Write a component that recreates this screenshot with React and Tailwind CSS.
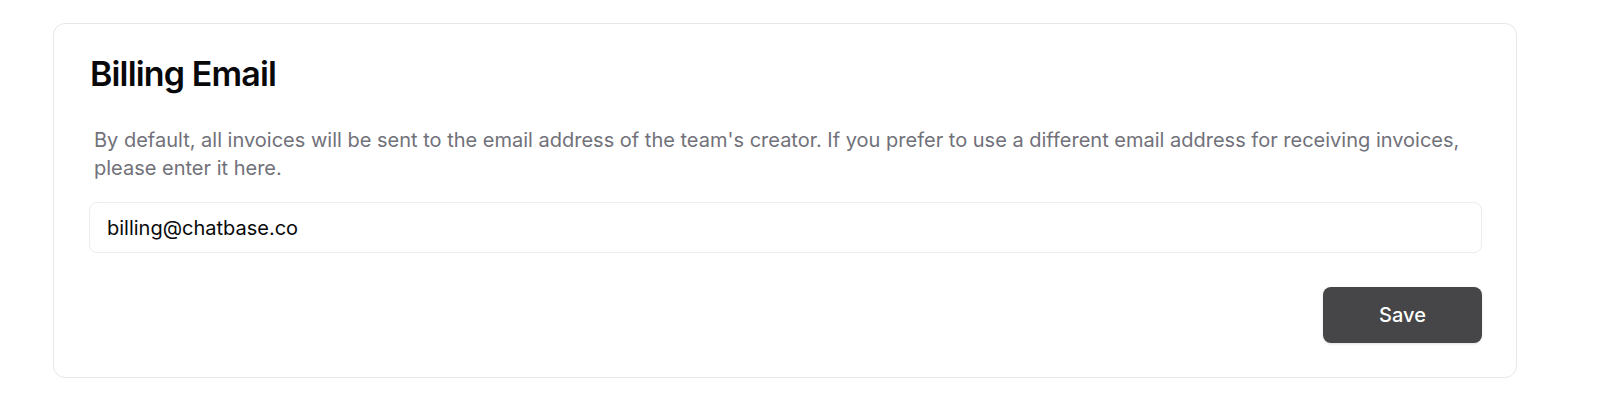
import { useState } from 'react';

export default function App() {
  const [email, setEmail] = useState('billing@chatbase.co');

  return (
    <div className="min-h-screen bg-white pt-[23px] pl-[53px]" style={{ fontFamily: 'Inter, "Noto Sans", sans-serif' }}>
      <div className="w-[1464px] rounded-xl border border-[#e7e7e9] bg-white pl-[35px] pr-[34px] pt-[30px] pb-[34px]">
        {/* Title */}
        <h2 className="pl-px text-[34px] font-semibold leading-10 tracking-tight text-[#09090b]">Billing Email</h2>

        {/* Description */}
        <p className="mt-8 px-[5px] text-xl leading-7 text-[#71717a]">
          By default, all invoices will be sent to the email address of the team's creator. If you prefer to use a different email address for receiving invoices, please enter it here.
        </p>

        {/* Input */}
        <input
          type="email"
          value={email}
          onChange={(e) => setEmail(e.target.value)}
          className="mt-5 block h-[51px] w-full rounded-lg border border-[#ececee] bg-white px-[17px] text-xl text-[#09090b] outline-none"
        />

        {/* Actions */}
        <div className="mt-[34px] flex justify-end">
          <button className="h-14 w-[159px] rounded-lg bg-[#464648] text-xl font-medium text-white shadow-sm">
            Save
          </button>
        </div>
      </div>
    </div>
  );
}
